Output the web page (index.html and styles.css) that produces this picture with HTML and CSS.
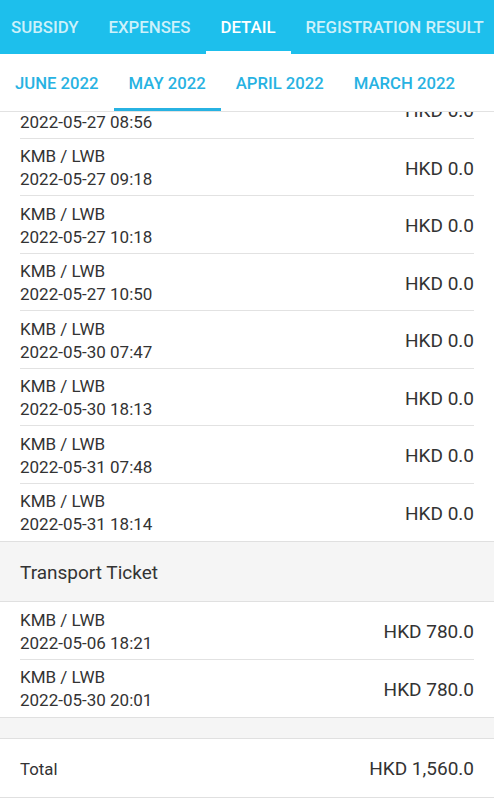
FILE: index.html
```html
<!DOCTYPE html>
<html lang="en">
<head>
    <meta charset="UTF-8">
    <meta name="viewport" content="width=device-width, initial-scale=1.0">
    <title>Detail</title>
    <link rel="stylesheet" href="styles.css">
</head>
<body>

<div class="top-tabs">
    <div class="top-tab">SUBSIDY</div>
    <div class="top-tab">EXPENSES</div>
    <div class="top-tab active">DETAIL</div>
    <div class="top-tab">REGISTRATION RESULT</div>
</div>

<div class="month-tabs">
    <div class="month-tab">JUNE 2022</div>
    <div class="month-tab active">MAY 2022</div>
    <div class="month-tab">APRIL 2022</div>
    <div class="month-tab">MARCH 2022</div>
</div>

<div class="content">
    <div class="list">
        <div class="section">
            <div class="row">
                <div class="row-info"><div>KMB / LWB</div><div>2022-05-27 08:56</div></div>
                <div class="amount">HKD 0.0</div>
            </div>
            <div class="row">
                <div class="row-info"><div>KMB / LWB</div><div>2022-05-27 09:18</div></div>
                <div class="amount">HKD 0.0</div>
            </div>
            <div class="row">
                <div class="row-info"><div>KMB / LWB</div><div>2022-05-27 10:18</div></div>
                <div class="amount">HKD 0.0</div>
            </div>
            <div class="row">
                <div class="row-info"><div>KMB / LWB</div><div>2022-05-27 10:50</div></div>
                <div class="amount">HKD 0.0</div>
            </div>
            <div class="row">
                <div class="row-info"><div>KMB / LWB</div><div>2022-05-30 07:47</div></div>
                <div class="amount">HKD 0.0</div>
            </div>
            <div class="row">
                <div class="row-info"><div>KMB / LWB</div><div>2022-05-30 18:13</div></div>
                <div class="amount">HKD 0.0</div>
            </div>
            <div class="row">
                <div class="row-info"><div>KMB / LWB</div><div>2022-05-31 07:48</div></div>
                <div class="amount">HKD 0.0</div>
            </div>
            <div class="row">
                <div class="row-info"><div>KMB / LWB</div><div>2022-05-31 18:14</div></div>
                <div class="amount">HKD 0.0</div>
            </div>
        </div>

        <div class="section-title">Transport Ticket</div>
        <div class="section">
            <div class="row">
                <div class="row-info"><div>KMB / LWB</div><div>2022-05-06 18:21</div></div>
                <div class="amount">HKD 780.0</div>
            </div>
            <div class="row">
                <div class="row-info"><div>KMB / LWB</div><div>2022-05-30 20:01</div></div>
                <div class="amount">HKD 780.0</div>
            </div>
        </div>

        <div class="spacer"></div>

        <div class="total-row">
            <div>Total</div>
            <div class="amount">HKD 1,560.0</div>
        </div>
    </div>
</div>

</body>
</html>
```

FILE: styles.css
```css
* {
    margin: 0;
    padding: 0;
    box-sizing: border-box;
    font-family: Roboto, "Liberation Sans", sans-serif;
}
body {
    background: #fff;
    color: #333;
    height: 800px;
    overflow: hidden;
}

/* Main tabs */
.top-tabs {
    display: flex;
    height: 54px;
    background: #1dbfec;
    margin-left: -4px;
    white-space: nowrap;
    position: relative;
    z-index: 2;
}
.top-tab {
    padding: 3px 15px 0;
    font-size: 16.8px;
    font-weight: 500;
    color: rgba(255, 255, 255, 0.78);
    line-height: 48px;
    border-bottom: 3px solid transparent;
}
.top-tab.active {
    color: #fff;
    border-bottom-color: #fff;
}

/* Month tabs */
.month-tabs {
    display: flex;
    height: 58px;
    background: #fff;
    border-bottom: 1px solid #e2e2e2;
    white-space: nowrap;
    position: relative;
    z-index: 2;
}
.month-tab {
    padding: 3px 15px 0;
    font-size: 16.7px;
    font-weight: 500;
    color: #27b2e2;
    line-height: 54px;
    border-bottom: 3px solid transparent;
}
.month-tab.active {
    border-bottom-color: #27b2e2;
}

/* List */
.content {
    overflow: hidden;
}
.list {
    margin-top: -31px;
}
.section {
    border-bottom: 1px solid #e0e0e0;
}
.row {
    display: flex;
    align-items: center;
    justify-content: space-between;
    margin: 0 20px;
    padding: 6.5px 0 4px;
    border-bottom: 1px solid #e2e2e2;
    font-size: 17px;
    line-height: 23px;
}
.row:last-child {
    border-bottom: none;
    padding-bottom: 5px;
}
.amount {
    font-size: 19px;
    color: #333;
}
.section-title {
    background: #f5f5f5;
    border-bottom: 1px solid #e0e0e0;
    height: 60px;
    line-height: 61px;
    padding: 0 20px;
    font-size: 19px;
}
.spacer {
    height: 21px;
    background: #f5f5f5;
    border-bottom: 1px solid #e0e0e0;
}
.total-row {
    display: flex;
    align-items: center;
    justify-content: space-between;
    height: 59px;
    padding: 1px 20px 0;
    border-bottom: 1px solid #e0e0e0;
    font-size: 16.8px;
}
```
